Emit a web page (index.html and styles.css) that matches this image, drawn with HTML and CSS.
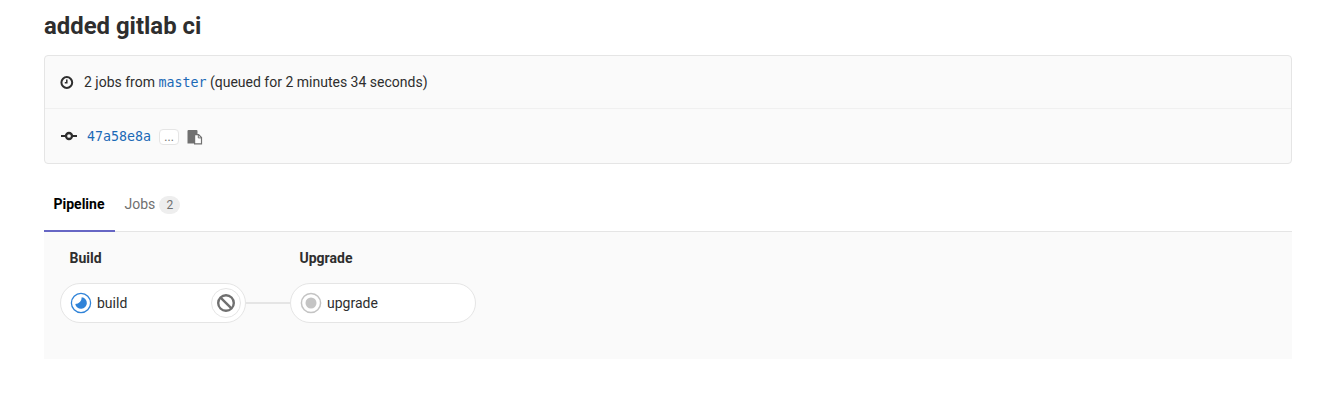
FILE: index.html
```html
<!DOCTYPE html>
<html lang="en">
<head>
<meta charset="utf-8">
<title>added gitlab ci</title>
<link rel="stylesheet" href="styles.css">
</head>
<body>
<main class="page">
  <h1 class="title">added gitlab ci</h1>
  <section class="info">
    <div class="info-row info-row-top">
      <svg class="icon-clock" width="14" height="14" viewBox="0 0 14 14"><circle cx="6.800" cy="7.500" r="5.400" fill="none" stroke="#2e2e2e" stroke-width="2"/><path d="M6.800 4.500v3.300H4.800" fill="none" stroke="#2e2e2e" stroke-width="1.500"/></svg>
      <span>2 jobs from <a class="mono" href="#">master</a> (queued for 2 minutes 34 seconds)</span>
    </div>
    <div class="info-row info-row-bottom">
      <svg class="icon-commit" width="16" height="16" viewBox="0 0 16 16"><path d="M0 8h4.500M11.500 8H16" stroke="#2e2e2e" stroke-width="2"/><circle cx="8" cy="8" r="3" fill="none" stroke="#2e2e2e" stroke-width="2.300"/></svg>
      <a class="mono sha" href="#">47a58e8a</a>
      <span class="ellipsis">...</span>
      <svg class="icon-copy" width="16" height="16" viewBox="0 0 16 16"><path d="M1.500 0h8a1 1 0 0 1 1 1v3H7v9.500H.5V1a1 1 0 0 1 1-1z" fill="#707070"/><path d="M7.600 4.600h4l2.900 2.900v6.300H7.600z" fill="#fff" stroke="#707070" stroke-width="1.200"/><path d="M11.300 4.600v3.300h3.200" fill="none" stroke="#707070" stroke-width="1"/></svg>
    </div>
  </section>
  <nav class="tabs">
    <a class="tab tab-active" href="#">Pipeline</a>
    <a class="tab tab-jobs" href="#">Jobs <span class="badge">2</span></a>
  </nav>
  <section class="pipeline">
    <div class="stage stage-build">
      <div class="stage-name">Build</div>
      <div class="job">
        <svg class="status" width="22" height="22" viewBox="0 0 22 22"><circle cx="11" cy="11" r="9.600" fill="#fff" stroke="#2f83d8" stroke-width="1.300"/><path d="M11.700 5.300a5.800 5.800 0 1 1-6.400 6.600 6.400 6.400 0 0 0 6.400-6.600z" fill="#2f83d8"/></svg>
        <span class="job-name">build</span>
        <span class="action">
          <svg width="20" height="20" viewBox="0 0 20 20"><circle cx="10" cy="10" r="7.800" fill="none" stroke="#707070" stroke-width="2.400"/><path d="M4.600 4.600l10.800 10.800" stroke="#707070" stroke-width="2.400"/></svg>
        </span>
      </div>
    </div>
    <div class="connector"></div>
    <div class="stage stage-upgrade">
      <div class="stage-name">Upgrade</div>
      <div class="job">
        <svg class="status" width="22" height="22" viewBox="0 0 22 22"><circle cx="11" cy="11" r="9.600" fill="#fff" stroke="#c4c4c4" stroke-width="1.500"/><circle cx="11" cy="11" r="5.500" fill="#c4c4c4"/></svg>
        <span class="job-name">upgrade</span>
      </div>
    </div>
  </section>
</main>
</body>
</html>
```
FILE: styles.css
```css
* { box-sizing: border-box; }
html, body { margin: 0; padding: 0; }
body {
  background: #fff;
  color: #2e2e2e;
  font-family: Roboto, "Liberation Sans", sans-serif;
  font-size: 14px;
  line-height: 20px;
}
a { text-decoration: none; color: #1b69b6; }
.page { margin: 0 35px 0 44px; }
.title {
  margin: 0;
  height: 55px;
  padding-top: 12px;
  font-size: 23.900px;
  line-height: 28px;
  font-weight: 700;
}
.info {
  background: #fafafa;
  border: 1px solid #e5e5e5;
  border-radius: 4px;
  height: 109px;
}
.info-row { display: flex; align-items: center; padding-left: 15px; }
.info-row-top { height: 53px; border-bottom: 1px solid #f0f0f0; }
.info-row-bottom { height: 54px; }
.icon-clock { margin-right: 10px; }
.icon-commit { margin-right: 10px; margin-left: 1px; }
.mono { font-family: "DejaVu Sans Mono", "Liberation Mono", monospace; font-size: 13.300px; }
.sha { color: #1b69b6; margin-top: 2px; }
.ellipsis {
  display: inline-flex;
  justify-content: center;
  width: 20px;
  height: 16px;
  margin: 2px 0 0 8px;
  background: #fff;
  border: 1px solid #e5e5e5;
  border-radius: 4px;
  color: #707070;
  font-size: 12px;
  line-height: 14px;
}
.icon-copy { margin: 4px 0 0 8px; }
.tabs {
  display: flex;
  height: 68px;
  padding-top: 20px;
  border-bottom: 1px solid #e5e5e5;
}
.tab {
  display: block;
  height: 48px;
  padding: 10px 10.500px 0 9.500px;
  color: #707070;
}
.tab-active {
  color: #000;
  font-weight: 700;
  border-bottom: 2px solid #6666c4;
}
.badge {
  display: inline-block;
  min-width: 21px;
  height: 18px;
  margin-left: 0.500px;
  border-radius: 9px;
  background: #eee;
  color: #707070;
  font-size: 12px;
  line-height: 18px;
  text-align: center;
}
.pipeline {
  display: flex;
  align-items: flex-end;
  height: 127px;
  padding: 0 0 36px 16px;
  background: #fafafa;
}
.stage { width: 186px; }
.stage-name {
  padding-left: 9.500px;
  margin-bottom: 15px;
  font-weight: 700;
  line-height: 20px;
}
.job {
  display: flex;
  align-items: center;
  height: 40px;
  padding-left: 9px;
  background: #fff;
  border: 1px solid #e5e5e5;
  border-radius: 20px;
}
.status { flex: none; }
.job-name { margin-left: 5px; flex: 1; }
.action {
  display: flex;
  align-items: center;
  justify-content: center;
  width: 30px;
  height: 30px;
  margin-right: 4px;
  background: #fff;
  border: 1px solid #e5e5e5;
  border-radius: 50%;
}
.connector {
  width: 44px;
  height: 2px;
  margin-bottom: 19px;
  background: #e5e5e5;
}
```
